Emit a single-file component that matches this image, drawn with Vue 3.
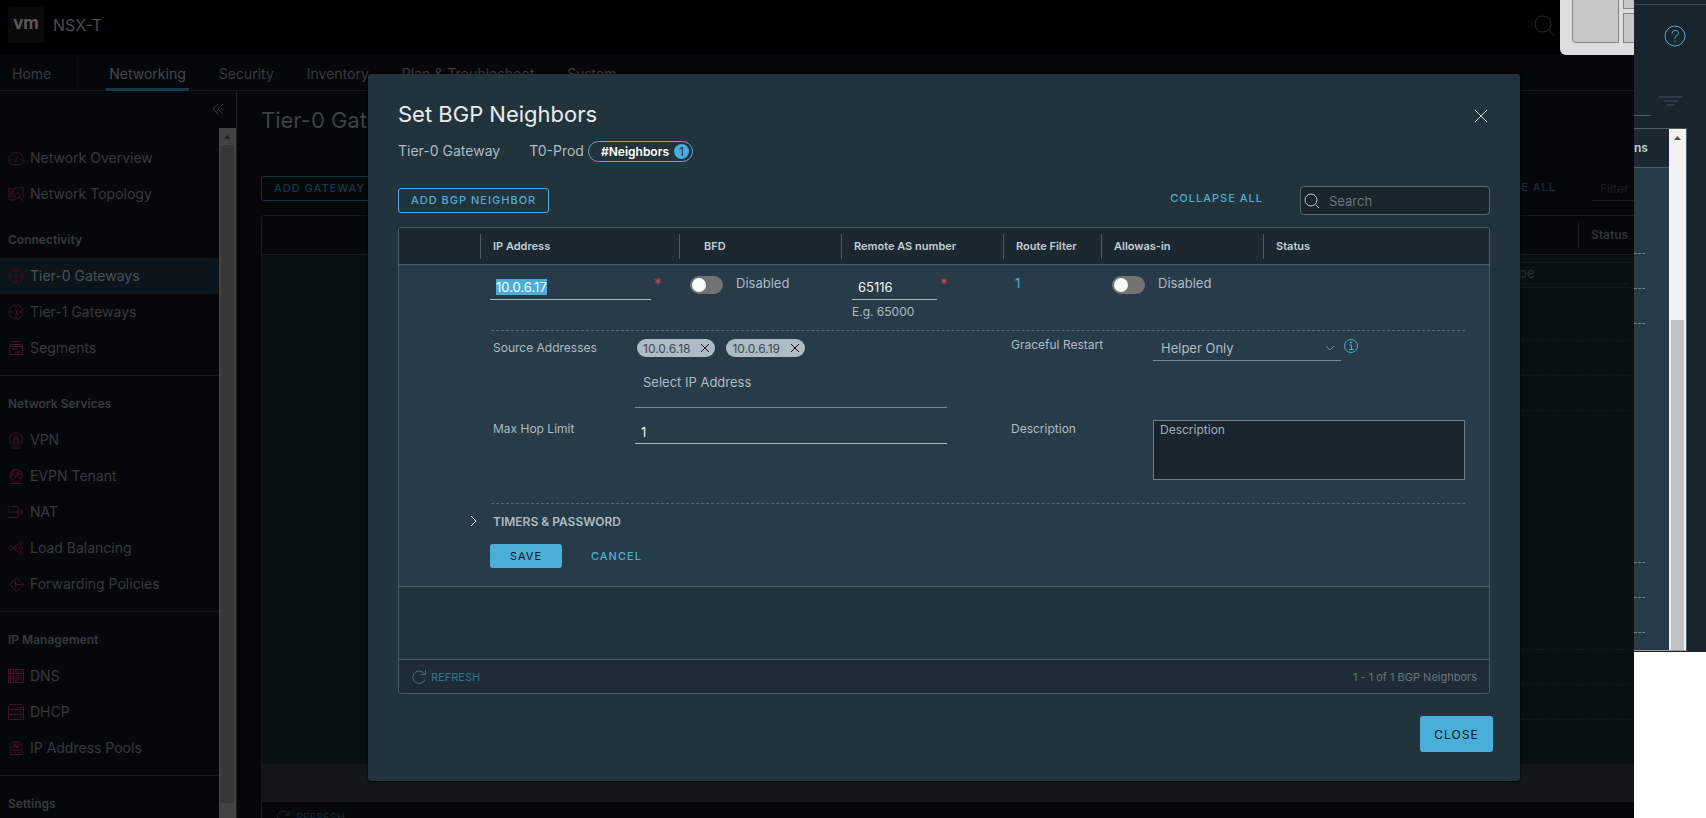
<script setup>
import { onMounted, ref } from 'vue'

const tabs = [
  { name: 'Home', first: true },
  { name: 'Networking', active: true },
  { name: 'Security' },
  { name: 'Inventory' },
  { name: 'Plan & Troubleshoot' },
  { name: 'System' },
]

const sections = [
  {
    items: [
      { name: 'Network Overview', icon: 'M3 14.500h10.500c2-2.500 2-6.500 0-9.500C11 1.800 5 1.800 2.500 5 .500 8 .500 12 3 14.500zM7 10.500l4-4M3.500 9.500h1M12 9.500h1M8 4.500v1M4.500 6l.700.700M6.500 11.500h2' },
      { name: 'Network Topology', icon: 'M1 2v11l4 1.500V3.500zM5 3.500L9 1.500l2 .800M5 14.500l3-1.500M15 3.500V12M11 2.300l4-1v3M9.500 7a2.700 2.700 0 1 0 .01 0zM11.500 11.500l3.500 3.500M3 5v6' },
    ],
  },
  {
    title: 'Connectivity',
    items: [
      { name: 'Tier-0 Gateways', active: true, icon: 'M8 1a7 7 0 1 0 .01 0zM8 6c-2 0-2 4 0 4s2-4 0-4zM8 2v2.500M7 3.500h2M8 11.500V14M7 12.500h2M2 8h2.500M3.500 7v2M11.500 8H14M12.500 7v2' },
      { name: 'Tier-1 Gateways', icon: 'M8 1a7 7 0 1 0 .01 0zM7 6.500h1.500V10M7 10h3M8 2v2M7 3.500h2M8 12v2M7 12.500h2M2 8h2.500M3.500 7v2M11.500 8H14M12.500 7v2' },
      { name: 'Segments', icon: 'M1.500 6.500h13v8h-13zM2.500 4.500h11M3.500 1.500h9M4 9h5M5.500 8v2M7 12h5M10.500 11v2M2 4v2M14 4v2' },
    ],
  },
  {
    title: 'Network Services',
    items: [
      { name: 'VPN', icon: 'M8 1a6.500 6.500 0 1 0 .01 0zM5.500 7h5v4h-5zM6.500 7V5c0-1.500 3-1.500 3 0v2M8 8.500v1M3 16h10' },
      { name: 'EVPN Tenant', icon: 'M8 1.500a6 6 0 1 0 .01 0zM3 5l10 5.500M6 2l-3 8M5 12l7-9M7 4l6 3M3 15.500h10' },
      { name: 'NAT', icon: 'M0 2.500h2M3 2.500h7v11H3M0 13.500h2M0 8h15M12.500 5.500L15 8l-2.500 2.500M0 5.500h1' },
      { name: 'Load Balancing', icon: 'M3 6a2 2 0 1 0 .01 0zM13 1.500a1.500 1.500 0 1 0 .01 0zM13 6.500a1.500 1.500 0 1 0 .01 0zM13 11.500a1.500 1.500 0 1 0 .01 0zM5 7.500l6.500-4M5 8h6.500M5 8.500l6.500 4' },
      { name: 'Forwarding Policies', icon: 'M12 5L8.500 1.500 1.500 8.500l7 7L12 12M7.500 5.500v6M7.500 8.500H16M13.500 6L16 8.500 13.500 11' },
    ],
  },
  {
    title: 'IP Management',
    items: [
      { name: 'DNS', icon: 'M.5 1.500h15v13H.5zM.5 5.500h15M.5 10h15M5.500 1.500v13M2.500 2v12M8 2v12M10 2v12M12 3.500h2M12 7.500h2M12 12h2' },
      { name: 'DHCP', icon: 'M2 .5h12l1.500 2v13H.5v-13zM.5 5.500h15M.5 10.500h15M11.500 3.500h2M11.500 8h2M11.500 13h2' },
      { name: 'IP Address Pools', icon: 'M2 9.500V6c0-6 12-6 12 0v3.500M2 10h12v4.500H2zM4 8l3-4 2 4 3-3M8 3a2 2 0 1 0 .01 0zM4 12.500h1M7 12.500h1M10 12.500h2' },
    ],
  },
  { title: 'Settings', items: [] },
]

const columns = ['', 'IP Address', 'BFD', 'Remote AS number', 'Route Filter', 'Allowas-in', 'Status']
const lanes = ['filter', 'short', 'short', 'tall', 'short', 'short']

const ip = ref('10.0.6.17')
const asNumber = ref('65116')
const maxHop = ref('1')
const sources = ref(['10.0.6.18', '10.0.6.19'])
const bfd = ref(false)
const allowasIn = ref(false)
const ipInput = ref(null)

onMounted(() => {
  ipInput.value.focus()
  ipInput.value.select()
})

function removeSource(address) {
  sources.value = sources.value.filter((s) => s !== address)
}
</script>

<template>
  <div class="page">
    <div class="app">
      <header class="topbar">
        <div class="brand">
          <span class="logo">vm</span>
          <span class="product">NSX-T</span>
        </div>
        <div class="topbar-right">
          <svg class="top-search" viewBox="0 0 22 22"><circle cx="9" cy="9" r="8" /><path d="M15 15l6 6" /></svg>
          <div class="tiles"><i class="tile-main"></i><span class="tile-col"><i></i><i></i></span></div>
        </div>
      </header>

      <nav class="tabs">
        <a v-for="t in tabs" :key="t.name" href="#" :class="{ active: t.active, first: t.first }">{{ t.name }}</a>
      </nav>

      <div class="workspace">
        <aside class="sidebar">
          <div class="side-head">
            <button class="collapse" aria-label="Collapse navigation">
              <svg viewBox="0 0 12 12"><path d="M6 1L1 6l5 5M11 1L6 6l5 5" /></svg>
            </button>
          </div>
          <div class="side-body">
            <div class="side-list">
              <section v-for="(s, i) in sections" :key="i" :class="{ plain: i === 0 }">
                <h3 v-if="s.title">{{ s.title }}</h3>
                <a v-for="it in s.items" :key="it.name" href="#" :class="{ active: it.active }">
                  <svg viewBox="0 0 16 16"><path :d="it.icon" /></svg>
                  <span>{{ it.name }}</span>
                </a>
              </section>
            </div>
            <div class="side-scroll">
              <svg viewBox="0 0 17 17"><path d="M5 11l3.500-4 3.500 4z" /></svg>
              <i></i>
            </div>
          </div>
        </aside>

        <main class="gateways">
          <h1>Tier-0 Gateways</h1>
          <div class="gw-tools">
            <button class="gw-add">ADD GATEWAY</button>
            <button class="gw-collapse">COLLAPSE ALL</button>
            <input class="gw-filter" aria-label="Filter" placeholder="Filter" />
          </div>
          <div class="gw-table">
            <div class="gw-head"><span>Status</span></div>
            <div class="gw-lanes">
              <div v-for="(l, i) in lanes" :key="i" class="lane" :class="l">
                <div v-if="i === 0" class="gw-edit"><span>Type</span></div>
              </div>
            </div>
            <div class="gw-band"></div>
            <div class="gw-foot">
              <svg viewBox="0 0 14 14"><path d="M12.500 4.500A6 6 0 1 0 13 9M13 1v4H9" /></svg>
              <span>REFRESH</span>
            </div>
          </div>
        </main>
      </div>

      <div class="overlay">
        <div class="modal" role="dialog" aria-labelledby="dialog-title">
          <div class="modal-head">
            <h2 id="dialog-title">Set BGP Neighbors</h2>
            <button class="x" aria-label="Close dialog">
              <svg viewBox="0 0 14 14"><path d="M1 1l12 12M13 1L1 13" /></svg>
            </button>
          </div>
          <div class="crumb">
            <span class="crumb-type">Tier-0 Gateway</span>
            <span class="crumb-name">T0-Prod</span>
            <span class="pill">#Neighbors<b>1</b></span>
          </div>
          <div class="tools">
            <button class="outline">ADD BGP NEIGHBOR</button>
            <button class="link collapse-all">COLLAPSE ALL</button>
            <div class="search">
              <svg viewBox="0 0 16 16"><circle cx="7" cy="7" r="6" /><path d="M11.500 11.500L15 15" /></svg>
              <input type="search" aria-label="Search" placeholder="Search" />
            </div>
          </div>

          <div class="grid">
            <table>
              <colgroup><col v-for="(c, i) in columns" :key="i" :class="'c' + i" /></colgroup>
              <thead>
                <tr>
                  <th v-for="(c, i) in columns" :key="i" :class="'h' + i"><div>{{ c }}</div></th>
                </tr>
              </thead>
              <tbody>
                <tr class="edit">
                  <td></td>
                  <td>
                    <div class="required ip">
                      <input ref="ipInput" v-model="ip" class="line" aria-label="IP Address" /><span class="star">*</span>
                    </div>
                  </td>
                  <td><label class="switch"><input v-model="bfd" type="checkbox" />{{ bfd ? 'Enabled' : 'Disabled' }}</label></td>
                  <td>
                    <div class="required as">
                      <input v-model="asNumber" class="line" aria-label="Remote AS number" /><span class="star">*</span>
                    </div>
                    <div class="hint">E.g. 65000</div>
                  </td>
                  <td><a href="#" class="count">1</a></td>
                  <td><label class="switch"><input v-model="allowasIn" type="checkbox" />{{ allowasIn ? 'Enabled' : 'Disabled' }}</label></td>
                  <td></td>
                </tr>
                <tr>
                  <td colspan="7" class="detail">
                    <div class="fields">
                      <div class="field">
                        <label for="src">Source Addresses</label>
                        <div>
                          <div class="chips">
                            <span v-for="s in sources" :key="s" class="chip">{{ s }}
                              <button :aria-label="'Remove ' + s" @click="removeSource(s)">
                                <svg viewBox="0 0 8 8"><path d="M0 0l8 8M8 0L0 8" /></svg>
                              </button>
                            </span>
                          </div>
                          <input id="src" class="line pick" placeholder="Select IP Address" />
                        </div>
                      </div>
                      <div class="field">
                        <label for="restart" class="raised">Graceful Restart</label>
                        <div class="restart">
                          <span class="select">
                            <select id="restart"><option>Helper Only</option><option>Disable</option><option>Graceful Restart and Helper</option></select>
                            <svg viewBox="0 0 8 6"><path d="M0 1l4 4 4-4" /></svg>
                          </span>
                          <svg class="info" viewBox="0 0 14 14"><circle cx="7" cy="7" r="6.500" /><path d="M5.500 6H7.500v4.500M5 10.500h4.500M6.500 3h1v1h-1z" /></svg>
                        </div>
                      </div>
                      <div class="field">
                        <label for="hop">Max Hop Limit</label>
                        <div><input id="hop" v-model="maxHop" class="line hop" /></div>
                      </div>
                      <div class="field">
                        <label for="desc">Description</label>
                        <textarea id="desc" placeholder="Description"></textarea>
                      </div>
                    </div>
                    <button class="timers">
                      <svg viewBox="0 0 8 12"><path d="M1 1l5 5-5 5" /></svg>
                      <span>TIMERS &amp; PASSWORD</span>
                    </button>
                    <div class="actions">
                      <button class="save">SAVE</button>
                      <button class="link">CANCEL</button>
                    </div>
                  </td>
                </tr>
              </tbody>
            </table>
            <div class="blank"></div>
            <div class="grid-foot">
              <button class="refresh">
                <svg viewBox="0 0 14 14"><path d="M12.500 4A6.300 6.300 0 1 0 13 9.500M13.500 0v4.500H9" /></svg>
                REFRESH
              </button>
              <span>1 - 1 of 1 BGP Neighbors</span>
            </div>
          </div>
          <div class="modal-foot"><button class="close">CLOSE</button></div>
        </div>
      </div>
    </div>

    <div class="strip">
      <div class="strip-top">
        <svg class="help" viewBox="0 0 22 22"><circle cx="11" cy="11" r="10" /><path d="M8 8.500c0-4.500 7-4 6.500 0-.300 2-3.500 2.300-3.500 4.500v.500M11 15.500v1.500" /></svg>
        <svg class="funnel" viewBox="0 0 24 12"><path d="M0 2h24M5 6h14M8 10h8" /></svg>
        <i class="stub"></i>
      </div>
      <div class="strip-grid">
        <div class="strip-body">
          <div class="strip-head">ns</div>
          <div v-for="(l, i) in lanes" :key="i" class="side-lane" :class="l"></div>
        </div>
        <div class="strip-scroll">
          <svg viewBox="0 0 17 17"><path d="M5 11l3.500-4 3.500 4z" /></svg>
          <i></i>
        </div>
      </div>
    </div>
  </div>
</template>

<style>
body { margin: 0; background: #fff; }
</style>

<style scoped>
* { box-sizing: border-box; }
.page { display: flex; align-items: flex-start; height: 100vh; overflow: hidden; font-family: Inter, "Open Sans", sans-serif; font-size: 13px; color: #adbbc4; }
button { font: inherit; color: inherit; background: none; border: 0; padding: 0; cursor: pointer; }
input, textarea, select { font: inherit; color: inherit; background: none; border: 0; outline: 0; padding: 0; margin: 0; min-width: 0; }
a { color: inherit; text-decoration: none; }
h1, h2, h3 { margin: 0; font-weight: 400; }
svg { fill: none; stroke: currentColor; flex: none; display: block; }
i { display: block; }

.app { position: relative; flex: 1; min-width: 0; height: 100%; display: flex; flex-direction: column; overflow: hidden; background: #04080b; color: #363b3f; }

.topbar { flex: none; height: 55px; background: #000; display: flex; justify-content: space-between; }
.brand { display: flex; align-items: center; gap: 9px; padding: 0 0 5px 8px; }
.logo { width: 36px; height: 36px; border-radius: 2px; background: #0a0a0a; color: #5a5a5a; font-size: 17px; font-weight: 700; line-height: 33px; text-align: center; }
.product { font-size: 16px; color: #4d4d4d; }
.topbar-right { display: flex; gap: 4px; }
.top-search { width: 22px; height: 22px; margin-top: 15px; color: #2b2b2b; }
.tiles { display: flex; gap: 4px; width: 74px; padding-left: 12px; background: #dcdddd; border-bottom-left-radius: 6px; overflow: hidden; }
.tile-main { flex: none; width: 47px; height: 43px; background: #c6c7c7; border: 1px solid #858585; border-top: 0; border-bottom-left-radius: 4px; }
.tile-col { flex: 1; display: flex; flex-direction: column; gap: 4px; }
.tile-col i { height: 9px; background: #c6c7c7; border: 1px solid #858585; border-width: 0 0 1px 1px; }
.tile-col i + i { height: 30px; border-top-width: 1px; }

.tabs { flex: none; height: 36px; display: flex; gap: 27px; padding-left: 9px; border-bottom: 1px solid #12171a; font-size: 14px; white-space: nowrap; }
.tabs a { padding: 0 3px; line-height: 37px; height: 36px; }
.tabs .first { padding-right: 26px; margin-right: 1px; border-right: 1px solid #080d10; }
.tabs .active { color: #42494e; border-bottom: 3px solid #15384a; }

.workspace { flex: 1; min-height: 0; display: flex; }
.sidebar { flex: none; width: 237px; display: flex; flex-direction: column; border-right: 1px solid #1b1f22; }
.side-head { flex: none; height: 37px; display: flex; justify-content: flex-end; align-items: flex-start; padding: 12px 12px 0 0; }
.collapse svg { width: 12px; height: 12px; }
.side-body { flex: 1; min-height: 0; display: flex; }
.side-list { flex: 1; min-width: 0; overflow: hidden; }
.side-list section { padding-bottom: 9px; border-bottom: 1px solid #14191c; }
.side-list .plain { padding: 12px 0 0; border: 0; }
.side-list h3 { height: 46px; padding: 10px 0 0 8px; line-height: 36px; font-size: 12px; font-weight: 600; }
.side-list a { display: flex; align-items: center; gap: 6px; height: 36px; padding-left: 8px; font-size: 14px; white-space: nowrap; }
.side-list a span { padding-bottom: 2px; }
.side-list a svg { width: 16px; height: 16px; color: #470f29; overflow: visible; }
.side-list .active { background: #0c151b; color: #4a5054; }
.side-scroll { flex: none; width: 17px; background: #434343; display: flex; flex-direction: column; padding-bottom: 15px; }
.side-scroll svg { width: 17px; height: 17px; fill: #222; stroke: none; }
.side-scroll i { flex: 1; margin: 0 2px; background: #373737; }

.gateways { flex: 1; min-width: 0; padding: 15px 0 0 24px; display: flex; flex-direction: column; }
.gateways h1 { font-size: 22px; line-height: 28px; color: #3d4245; white-space: nowrap; }
.gw-tools { display: flex; align-items: center; margin-top: 42px; font-size: 12px; }
.gw-add { height: 25px; padding: 0 12px 2px; border: 1px solid #113242; border-radius: 3px; color: #153a4c; font-size: 11px; font-weight: 500; letter-spacing: 1px; }
.gw-collapse { margin-left: auto; margin-right: 36px; padding-bottom: 3px; color: #12303f; font-size: 11px; font-weight: 500; letter-spacing: 1px; }
.gw-filter { width: 42px; height: 25px; padding-left: 8px; border-bottom: 1px solid #14191c; }
.gw-filter::placeholder { color: #171d21; opacity: 1; }
.gw-table { flex: 1; margin-top: 14px; display: flex; flex-direction: column; border: 1px solid #14191c; border-width: 1px 0 0 1px; border-top-left-radius: 3px; }
.gw-head { flex: none; height: 39px; display: flex; justify-content: flex-end; align-items: center; border-bottom: 1px solid #14191c; font-size: 12px; font-weight: 600; color: #303538; }
.gw-head span { width: 56px; line-height: 26px; padding-left: 12px; border-left: 1px solid #14191c; }
.gw-lanes { flex: 1; min-height: 0; background: #081013; overflow: hidden; }
.lane { margin-left: 116px; height: 35px; border-bottom: 1px dashed #12191c; }
.lane.filter { height: 86px; padding-top: 7px; }
.lane.tall { height: 239px; }
.gw-edit { height: 26px; border: 1px solid #0e191e; border-width: 1px 0; padding-right: 6px; font-size: 14px; color: #2a2f32; display: flex; }
.gw-edit span { flex: 1; padding-right: 93px; line-height: 20px; height: 21px; border-bottom: 1px solid #14191c; text-align: right; }
.gw-band { flex: none; height: 38px; background: #14161b; }
.gw-foot { flex: none; height: 16px; display: flex; gap: 6px; padding: 8px 0 0 14px; overflow: hidden; color: #0f2430; font-size: 11px; }
.gw-foot svg { width: 14px; height: 14px; }

.overlay { position: absolute; inset: 0; padding: 74px 114px 0 368px; }
.modal { background: #22343b; border-radius: 3px; color: #adbbc4; box-shadow: 0 1px 3px #000; padding: 26px 30px 29px; }
.modal-head { display: flex; justify-content: space-between; align-items: flex-end; height: 28px; padding-right: 2px; }
.modal-head h2 { font-size: 22px; line-height: 28px; color: #e9ecef; }
.x { padding-bottom: 5px; }
.x svg { width: 14px; height: 14px; color: #ccd5da; }
.crumb { display: flex; align-items: center; height: 24px; margin-top: 11px; font-size: 14px; }
.crumb-type, .crumb-name { padding-bottom: 2px; }
.crumb-type { margin-right: 29px; }
.crumb-name { margin-right: 4px; }
.pill { display: flex; align-items: center; gap: 5px; height: 21px; padding: 0 3px 0 12px; border: 1px solid #49afd9; border-radius: 11px; color: #fff; font-size: 12px; font-weight: 600; }
.pill b { width: 15px; height: 15px; border-radius: 50%; background: #49afd9; color: #22343b; font-weight: 400; line-height: 15px; text-align: center; }
.tools { display: flex; align-items: center; margin-top: 23px; height: 29px; }
.outline { height: 25px; padding: 0 12px 2px; border: 1px solid #49afd9; border-radius: 3px; color: #49afd9; font-size: 11px; font-weight: 500; letter-spacing: 1px; }
.link { color: #49afd9; font-size: 11px; font-weight: 500; letter-spacing: 1px; }
.collapse-all { margin-left: auto; margin-right: 37px; padding-bottom: 5px; }
.search { display: flex; align-items: center; gap: 9px; width: 190px; height: 29px; padding: 0 3px; border: 1px solid #566870; border-radius: 4px; background: #19252d; }
.search svg { width: 16px; height: 16px; color: #b6c2c8; }
.search input { flex: 1; }
.search input::placeholder { color: #66747c; opacity: 1; }

.grid { margin-top: 12px; border: 1px solid #495b65; border-radius: 3px; overflow: hidden; }
table { width: 100%; table-layout: fixed; border-collapse: collapse; }
th, td { padding: 0; text-align: left; vertical-align: top; }
.c0 { width: 81px; }
.c1 { width: 199px; }
.c2, .c3, .c5 { width: 162px; }
.c4 { width: 98px; }
thead { background: #1b2830; }
th { height: 36px; padding-top: 6px; border-bottom: 1px solid #495b65; font-size: 11px; font-weight: 600; color: #c3ced4; white-space: nowrap; }
th div { height: 25px; line-height: 24px; padding-left: 12px; border-left: 1px solid #495b65; }
.h0 div { border: 0; }
.h2 div { padding-left: 24px; }
tbody { background: #273b48; border-bottom: 1px solid #495b65; }
.edit td { height: 66px; }
.required { display: flex; gap: 3px; padding: 9px 0 0 10px; }
.required.as { padding-left: 11px; }
.line { height: 26px; padding: 2px 6px 0; border-bottom: 1px solid #adbbc4; color: #f0f4f6; }
.ip .line { width: 161px; }
.line::selection { background: #49afd9; color: #fff; }
.as .line { width: 85px; }
.star { color: #c7494b; font-size: 15px; line-height: 20px; }
.hint { padding: 4px 0 0 11px; font-size: 12px; line-height: 16px; }
.switch { display: flex; align-items: flex-start; gap: 13px; height: 18px; margin-top: 11px; padding-left: 11px; line-height: 14px; cursor: pointer; }
.switch input { appearance: none; flex: none; width: 33px; height: 18px; padding: 2px; border-radius: 9px; background: #737373; }
.switch input::before { content: ''; display: block; width: 14px; height: 14px; border-radius: 50%; background: #fafafa; }
.switch input:checked { padding-left: 17px; background: #60b515; }
.count { display: block; margin-top: 9px; padding-left: 12px; line-height: 18px; color: #49afd9; }

.detail { padding: 0 24px 18px 92px; }
.fields { display: grid; grid-template-columns: 1fr 1fr; gap: 12px 64px; padding: 8px 0 23px 2px; border-top: 1px dashed #566873; border-bottom: 1px dashed #566873; }
.field { display: grid; grid-template-columns: 142px 1fr; align-items: start; }
.field > label { line-height: 18px; font-size: 12px; }
.field > .raised { margin-top: -3px; }
.field .line { width: 100%; display: block; }
.chips { display: flex; gap: 11px; padding-left: 2px; }
.chip { display: flex; align-items: center; gap: 11px; height: 18px; padding: 0 6px; border-radius: 9px; background: #adbbc4; color: #3c4a52; font-size: 12px; }
.chip svg { width: 8px; height: 8px; color: #111; overflow: visible; }
.field .pick { height: 39px; margin-top: 12px; padding: 0 8px 12px; border-color: #7b8a94; }
.pick::placeholder { color: #adbbc4; opacity: 1; }
.field .hop { height: 24px; padding-top: 0; }
.restart { display: flex; gap: 3px; }
.select { position: relative; width: 188px; height: 22px; border-bottom: 1px solid #7b8a94; }
.select select { appearance: none; display: block; width: 100%; height: 18px; padding-left: 8px; }
.select svg { position: absolute; right: 7px; top: 6px; width: 8px; height: 6px; color: #7b8a94; pointer-events: none; }
.info { width: 14px; height: 14px; color: #49afd9; }
textarea { display: block; width: 100%; height: 60px; resize: none; border: 1px solid #6f7b82; background: #19252d; padding: 0 6px; font-size: 12px; line-height: 18px; }
textarea::placeholder { color: #a3afb6; opacity: 1; }
.timers { display: flex; align-items: center; gap: 15px; height: 26px; margin: 4px 0 0 -21px; font-size: 12px; font-weight: 600; }
.timers svg { width: 8px; height: 12px; color: #e0f4fa; }
.actions { display: flex; align-items: center; gap: 29px; margin-top: 10px; }
.save { width: 72px; height: 24px; margin-left: -1px; border-radius: 3px; background: #49afd9; color: #0b1215; font-size: 11px; letter-spacing: 1px; }
.blank { height: 73px; border-bottom: 1px solid #495b65; }
.grid-foot { display: flex; justify-content: space-between; align-items: center; height: 33px; padding: 0 12px 0 13px; background: #1e2d35; color: #65747c; font-size: 11px; }
.refresh { display: flex; align-items: center; gap: 5px; color: #34718c; }
.refresh svg { width: 14px; height: 14px; }
.modal-foot { display: flex; justify-content: flex-end; margin: 22px -3px 0 0; }
.close { width: 73px; height: 36px; border-radius: 3px; background: #49afd9; color: #0b1215; font-size: 12px; letter-spacing: 1px; }

.strip { flex: none; width: 72px; height: 652px; display: flex; flex-direction: column; background: #19252d; }
.strip-top { flex: none; height: 128px; display: flex; flex-direction: column; }
.strip-top::before { content: ''; height: 4px; border-bottom: 1px solid #3b4a54; margin-bottom: 20px; }
.help { width: 22px; height: 22px; margin-left: 30px; color: #49afd9; }
.funnel { width: 24px; height: 12px; margin: 48px 0 0 25px; color: #2b3b46; stroke-width: 2; }
.stub { width: 17px; height: 1px; margin-top: 8px; background: #495b65; }
.strip-grid { flex: 1; min-height: 0; display: flex; margin-right: 19px; margin-bottom: 1px; border: 1px solid #495b65; border-left: 0; border-bottom-color: #9a9a9a; }
.strip-body { flex: 1; min-width: 0; background: #273b48; overflow: hidden; }
.strip-head { height: 39px; line-height: 38px; background: #1b2830; border-bottom: 1px solid #495b65; font-size: 12px; font-weight: 600; color: #c3ced4; }
.side-lane { width: 11px; height: 35px; border-bottom: 1px dashed #6f8089; }
.side-lane.filter { height: 86px; }
.side-lane.tall { height: 239px; }
.strip-scroll { flex: none; width: 17px; background: #f1f1f1; display: flex; flex-direction: column; }
.strip-scroll svg { width: 17px; height: 17px; fill: #505050; stroke: none; }
.strip-scroll i { flex: 1; margin: 174px 2px 0; background: #c1c1c1; }
</style>
